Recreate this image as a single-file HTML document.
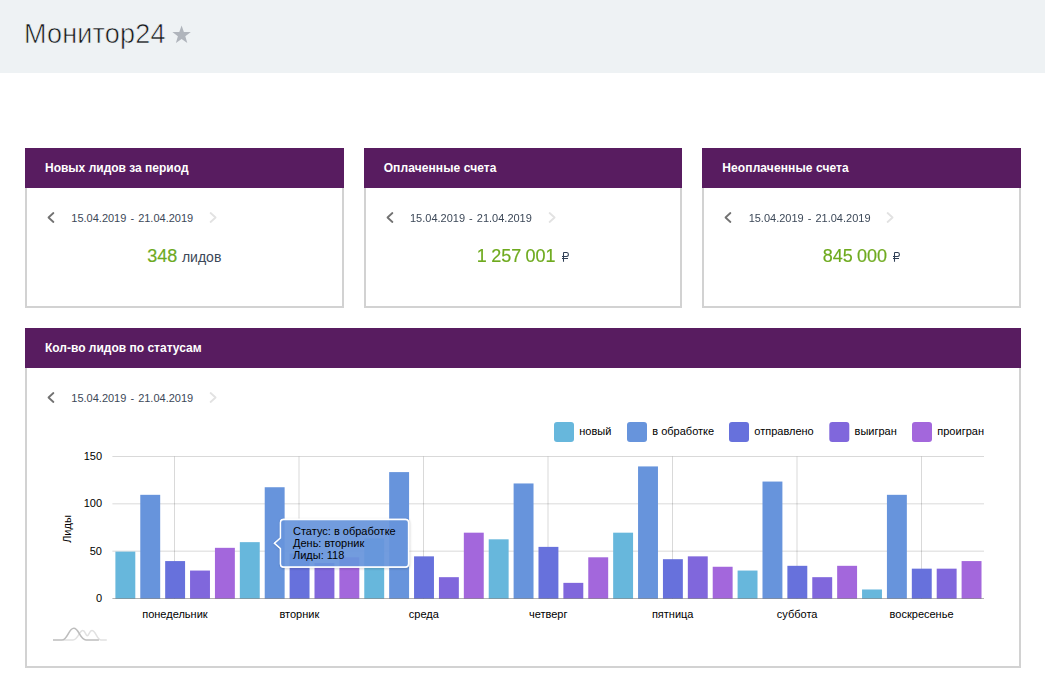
<!DOCTYPE html>
<html lang="ru"><head><meta charset="utf-8"><title>Монитор24</title>
<style>
html,body{margin:0;padding:0;background:#fff;}
body{width:1045px;height:685px;position:relative;overflow:hidden;font-family:"Liberation Sans",sans-serif;}
.abs{position:absolute;}
.gl{opacity:0.999;}
.top{left:0;top:0;width:1045px;height:73px;background:#eef2f4;}
.title{left:24px;top:17px;font-size:27px;line-height:34px;color:#16181b;white-space:nowrap;letter-spacing:0.2px;-webkit-text-stroke:0.62px #eef2f4;}
.card{box-sizing:border-box;border:2px solid #d2d2d2;background:#fff;}
.hdr{height:40px;background:#581c60;color:#fff;font-weight:bold;font-size:12px;line-height:40px;white-space:nowrap;}
.hdr span{position:absolute;left:20px;top:0;}
.date{font-size:11px;line-height:14px;color:#3c4858;white-space:nowrap;word-spacing:1px;}
.val{text-align:center;white-space:nowrap;height:24px;line-height:24px;font-size:14px;}
.num{font-size:18px;color:#6eaa1e;word-spacing:-0.7px;-webkit-text-stroke:0.18px #6eaa1e;position:relative;}
.unit{font-size:14px;color:#3c4858;margin-left:4.6px;}
.rub{margin-left:6.4px;vertical-align:baseline;position:relative;top:1.5px;}
svg text.ax{font-family:"Liberation Sans",sans-serif;font-size:11px;fill:#000;}
svg text.tt{font-family:"Liberation Sans",sans-serif;font-size:11px;fill:#000;}
</style></head><body>
<div class="abs top"></div>
<div class="abs title">Монитор24</div>
<svg class="abs" style="left:0;top:0" width="220" height="60" viewBox="0 0 220 60"><path d="M181.60,25.40 L179.31,31.94 L172.37,32.10 L177.89,36.31 L175.90,42.95 L181.60,39.00 L187.30,42.95 L185.31,36.31 L190.83,32.10 L183.89,31.94 Z" fill="#b0b5bc"/></svg>
<div class="gl">
<div class="abs card" style="left:25px;top:148px;width:318.67px;height:160px"></div>
<div class="abs hdr" style="left:25px;top:148px;width:318.67px"><span style="letter-spacing:0px">Новых лидов за период</span></div>
<svg class="abs" style="left:25px;top:208px" width="230" height="20" viewBox="0 0 230 20" fill="none" stroke-width="1.8" stroke-linecap="round" stroke-linejoin="round"><path d="M28.4,5 L23.5,9.5 L28.4,14" stroke="#727272"/><path d="M185.6,5 L190.6,9.5 L185.6,14" stroke="#e2e2e2"/></svg>
<div class="abs date" style="left:71.3px;top:211px">15.04.2019 - 21.04.2019</div>
<div class="abs val" style="left:25px;top:243.5px;width:318.67px"><span class="num" style="left:0px">348</span><span class="unit">лидов</span></div>
<div class="abs card" style="left:363.67px;top:148px;width:318.67px;height:160px"></div>
<div class="abs hdr" style="left:363.67px;top:148px;width:318.67px"><span style="letter-spacing:0.1px">Оплаченные счета</span></div>
<svg class="abs" style="left:363.67px;top:208px" width="230" height="20" viewBox="0 0 230 20" fill="none" stroke-width="1.8" stroke-linecap="round" stroke-linejoin="round"><path d="M28.4,5 L23.5,9.5 L28.4,14" stroke="#727272"/><path d="M185.6,5 L190.6,9.5 L185.6,14" stroke="#e2e2e2"/></svg>
<div class="abs date" style="left:409.97px;top:211px">15.04.2019 - 21.04.2019</div>
<div class="abs val" style="left:363.67px;top:243.5px;width:318.67px"><span class="num" style="left:0.4px">1 257 001</span><svg class="rub" style="left:0.4px" width="8" height="11" viewBox="0 0 8 11" fill="none" stroke="#2f3f55" stroke-width="1.05"><path d="M1.5,0.5 V9.7 M1.5,0.5 H4.4 a2,2 0 0 1 0,4 H0 M0,6.5 H6"/></svg></div>
<div class="abs card" style="left:702.33px;top:148px;width:318.67px;height:160px"></div>
<div class="abs hdr" style="left:702.33px;top:148px;width:318.67px"><span style="letter-spacing:0.1px">Неоплаченные счета</span></div>
<svg class="abs" style="left:702.33px;top:208px" width="230" height="20" viewBox="0 0 230 20" fill="none" stroke-width="1.8" stroke-linecap="round" stroke-linejoin="round"><path d="M28.4,5 L23.5,9.5 L28.4,14" stroke="#727272"/><path d="M185.6,5 L190.6,9.5 L185.6,14" stroke="#e2e2e2"/></svg>
<div class="abs date" style="left:748.63px;top:211px">15.04.2019 - 21.04.2019</div>
<div class="abs val" style="left:702.33px;top:243.5px;width:318.67px"><span class="num" style="left:0.4px">845 000</span><svg class="rub" style="left:0px" width="8" height="11" viewBox="0 0 8 11" fill="none" stroke="#2f3f55" stroke-width="1.05"><path d="M1.5,0.5 V9.7 M1.5,0.5 H4.4 a2,2 0 0 1 0,4 H0 M0,6.5 H6"/></svg></div>
<div class="abs card" style="left:25px;top:328px;width:996px;height:340px"></div>
<div class="abs hdr" style="left:25px;top:328px;width:996px"><span>Кол-во лидов по статусам</span></div>
<svg class="abs" style="left:25px;top:388px" width="230" height="20" viewBox="0 0 230 20" fill="none" stroke-width="1.8" stroke-linecap="round" stroke-linejoin="round"><path d="M28.4,5 L23.5,9.5 L28.4,14" stroke="#727272"/><path d="M185.6,5 L190.6,9.5 L185.6,14" stroke="#e2e2e2"/></svg>
<div class="abs date" style="left:71.3px;top:391px">15.04.2019 - 21.04.2019</div>
<svg class="abs" style="left:0;top:0" width="1045" height="685" viewBox="0 0 1045 685">
<line x1="112.40" x2="984.00" y1="456.50" y2="456.50" stroke="#000" stroke-opacity="0.15" stroke-width="1"/>
<line x1="112.40" x2="984.00" y1="503.83" y2="503.83" stroke="#000" stroke-opacity="0.15" stroke-width="1"/>
<line x1="112.40" x2="984.00" y1="551.17" y2="551.17" stroke="#000" stroke-opacity="0.15" stroke-width="1"/>
<line x1="174.50" x2="174.50" y1="456.50" y2="598.50" stroke="#000" stroke-opacity="0.15" stroke-width="1"/>
<line x1="299.00" x2="299.00" y1="456.50" y2="598.50" stroke="#000" stroke-opacity="0.15" stroke-width="1"/>
<line x1="423.50" x2="423.50" y1="456.50" y2="598.50" stroke="#000" stroke-opacity="0.15" stroke-width="1"/>
<line x1="548.00" x2="548.00" y1="456.50" y2="598.50" stroke="#000" stroke-opacity="0.15" stroke-width="1"/>
<line x1="672.50" x2="672.50" y1="456.50" y2="598.50" stroke="#000" stroke-opacity="0.15" stroke-width="1"/>
<line x1="797.00" x2="797.00" y1="456.50" y2="598.50" stroke="#000" stroke-opacity="0.15" stroke-width="1"/>
<line x1="921.50" x2="921.50" y1="456.50" y2="598.50" stroke="#000" stroke-opacity="0.15" stroke-width="1"/>
<rect x="115.39" y="551.62" width="19.91" height="46.88" fill="#67b7dc"/>
<rect x="140.28" y="494.82" width="19.91" height="103.68" fill="#6794dc"/>
<rect x="165.17" y="561.08" width="19.91" height="37.42" fill="#6771dc"/>
<rect x="190.05" y="570.55" width="19.91" height="27.95" fill="#8067dc"/>
<rect x="214.94" y="547.83" width="19.91" height="50.67" fill="#a367dc"/>
<rect x="239.83" y="542.15" width="19.91" height="56.35" fill="#67b7dc"/>
<rect x="264.72" y="487.24" width="19.91" height="111.26" fill="#6794dc"/>
<rect x="289.61" y="553.51" width="19.91" height="44.99" fill="#6771dc"/>
<rect x="314.50" y="562.98" width="19.91" height="35.52" fill="#8067dc"/>
<rect x="339.39" y="557.30" width="19.91" height="41.20" fill="#a367dc"/>
<rect x="364.27" y="538.36" width="19.91" height="60.14" fill="#67b7dc"/>
<rect x="389.16" y="472.10" width="19.91" height="126.40" fill="#6794dc"/>
<rect x="414.05" y="556.35" width="19.91" height="42.15" fill="#6771dc"/>
<rect x="438.94" y="577.18" width="19.91" height="21.32" fill="#8067dc"/>
<rect x="463.83" y="532.68" width="19.91" height="65.82" fill="#a367dc"/>
<rect x="488.72" y="539.31" width="19.91" height="59.19" fill="#67b7dc"/>
<rect x="513.61" y="483.46" width="19.91" height="115.04" fill="#6794dc"/>
<rect x="538.49" y="546.88" width="19.91" height="51.62" fill="#6771dc"/>
<rect x="563.38" y="582.86" width="19.91" height="15.64" fill="#8067dc"/>
<rect x="588.27" y="557.30" width="19.91" height="41.20" fill="#a367dc"/>
<rect x="613.16" y="532.68" width="19.91" height="65.82" fill="#67b7dc"/>
<rect x="638.05" y="466.42" width="19.91" height="132.08" fill="#6794dc"/>
<rect x="662.94" y="559.19" width="19.91" height="39.31" fill="#6771dc"/>
<rect x="687.83" y="556.35" width="19.91" height="42.15" fill="#8067dc"/>
<rect x="712.71" y="566.76" width="19.91" height="31.74" fill="#a367dc"/>
<rect x="737.60" y="570.55" width="19.91" height="27.95" fill="#67b7dc"/>
<rect x="762.49" y="481.56" width="19.91" height="116.94" fill="#6794dc"/>
<rect x="787.38" y="565.82" width="19.91" height="32.68" fill="#6771dc"/>
<rect x="812.27" y="577.18" width="19.91" height="21.32" fill="#8067dc"/>
<rect x="837.16" y="565.82" width="19.91" height="32.68" fill="#a367dc"/>
<rect x="862.05" y="589.48" width="19.91" height="9.02" fill="#67b7dc"/>
<rect x="886.93" y="494.82" width="19.91" height="103.68" fill="#6794dc"/>
<rect x="911.82" y="568.66" width="19.91" height="29.84" fill="#6771dc"/>
<rect x="936.71" y="568.66" width="19.91" height="29.84" fill="#8067dc"/>
<rect x="961.60" y="561.08" width="19.91" height="37.42" fill="#a367dc"/>
<line x1="112.40" x2="984.00" y1="598.50" y2="598.50" stroke="#000" stroke-opacity="0.3" stroke-width="1"/>
<text x="102" y="460.40" text-anchor="end" class="ax">150</text>
<text x="102" y="507.33" text-anchor="end" class="ax">100</text>
<text x="102" y="554.67" text-anchor="end" class="ax">50</text>
<text x="102" y="602.40" text-anchor="end" class="ax">0</text>
<text x="174.92" y="618" text-anchor="middle" class="ax">понедельник</text>
<text x="299.36" y="618" text-anchor="middle" class="ax">вторник</text>
<text x="423.81" y="618" text-anchor="middle" class="ax">среда</text>
<text x="548.25" y="618" text-anchor="middle" class="ax">четверг</text>
<text x="672.69" y="618" text-anchor="middle" class="ax">пятница</text>
<text x="797.14" y="618" text-anchor="middle" class="ax">суббота</text>
<text x="921.58" y="618" text-anchor="middle" class="ax">воскресенье</text>
<text transform="translate(70.7,529) rotate(-90)" text-anchor="middle" class="ax">Лиды</text>
<rect x="554" y="422" width="20" height="20" rx="3" ry="3" fill="#67b7dc"/>
<text x="579.3" y="435.3" class="ax">новый</text>
<rect x="627" y="422" width="20" height="20" rx="3" ry="3" fill="#6794dc"/>
<text x="652.3" y="435.3" class="ax">в обработке</text>
<rect x="729" y="422" width="20" height="20" rx="3" ry="3" fill="#6771dc"/>
<text x="754.3" y="435.3" class="ax">отправлено</text>
<rect x="829.3" y="422" width="20" height="20" rx="3" ry="3" fill="#8067dc"/>
<text x="854.5999999999999" y="435.3" class="ax">выигран</text>
<rect x="912" y="422" width="20" height="20" rx="3" ry="3" fill="#a367dc"/>
<text x="937.3" y="435.3" class="ax">проигран</text>
<defs><filter id="ts" x="-10%" y="-20%" width="120%" height="140%"><feDropShadow dx="0.5" dy="0.8" stdDeviation="0.9" flood-color="#000" flood-opacity="0.28"/></filter></defs>
<path d="M283.5,519.5 H405.5 a3,3 0 0 1 3,3 V564 a3,3 0 0 1 -3,3 H283.5 a3,3 0 0 1 -3,-3 V548.5 L274.5,543.2 L280.5,538 V522.5 a3,3 0 0 1 3,-3 Z" fill="none" stroke="#fff" stroke-width="1.3" filter="url(#ts)"/>
<g>
<path d="M283.5,519.5 H405.5 a3,3 0 0 1 3,3 V564 a3,3 0 0 1 -3,3 H283.5 a3,3 0 0 1 -3,-3 V548.5 L274.5,543.2 L280.5,538 V522.5 a3,3 0 0 1 3,-3 Z" fill="#6794dc" fill-opacity="0.93" stroke="#ffffff" stroke-width="1.3"/>
<text x="293" y="534.8" class="tt">Статус: в обработке</text>
<text x="293" y="546.8" class="tt">День: вторник</text>
<text x="293" y="558.8" class="tt">Лиды: 118</text>
</g>
<g fill="none" stroke-linecap="butt" stroke-linejoin="round">
<path d="M63.5,640 H73 C78,640 79.3,630.6 82.8,630.6 C85.3,630.6 85.7,635.8 87.3,635.8 C88.9,635.8 89.4,630.6 91.9,630.6 C95.6,630.6 97.3,640 101,640 H106.8" stroke="#e1e1e1" stroke-width="1.5"/>
<path d="M53,640 H62 C67.5,640 68.6,628.3 73.8,628.3 C79,628.3 80.1,640 86,640 H98.9" stroke="#bdbdbd" stroke-width="1.6"/>
</g>
</svg>
</div>
</body></html>
